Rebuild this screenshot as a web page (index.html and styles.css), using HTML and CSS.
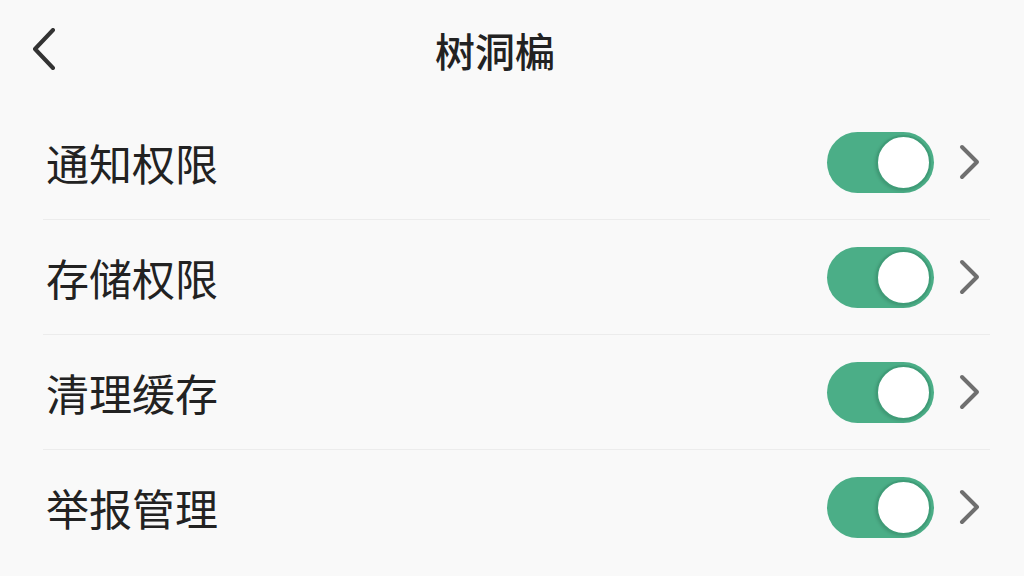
FILE: index.html
```html
<!DOCTYPE html>
<html lang="zh">
<head>
<meta charset="utf-8">
<title>树洞楄</title>
<link rel="stylesheet" href="styles.css">
</head>
<body>
<div class="page">
  <header class="header">
    <span class="back">
      <svg width="26" height="42" viewBox="0 0 26 42"><polyline points="22,2 4,21 22,40" fill="none" stroke="#333" stroke-width="4" stroke-linecap="round" stroke-linejoin="round"/></svg>
    </span>
    <h1 class="title">树洞楄</h1>
  </header>
  <ul class="list">
    <li class="row"><span class="label">通知权限</span><span class="toggle"><span class="knob"></span></span><span class="arrow"><svg width="22" height="36" viewBox="0 0 22 36"><polyline points="3,3 18,18 3,33" fill="none" stroke="#6f6f6f" stroke-width="4" stroke-linecap="round" stroke-linejoin="round"/></svg></span></li>
    <li class="row"><span class="label">存储权限</span><span class="toggle"><span class="knob"></span></span><span class="arrow"><svg width="22" height="36" viewBox="0 0 22 36"><polyline points="3,3 18,18 3,33" fill="none" stroke="#6f6f6f" stroke-width="4" stroke-linecap="round" stroke-linejoin="round"/></svg></span></li>
    <li class="row"><span class="label">清理缓存</span><span class="toggle"><span class="knob"></span></span><span class="arrow"><svg width="22" height="36" viewBox="0 0 22 36"><polyline points="3,3 18,18 3,33" fill="none" stroke="#6f6f6f" stroke-width="4" stroke-linecap="round" stroke-linejoin="round"/></svg></span></li>
    <li class="row last"><span class="label">举报管理</span><span class="toggle"><span class="knob"></span></span><span class="arrow"><svg width="22" height="36" viewBox="0 0 22 36"><polyline points="3,3 18,18 3,33" fill="none" stroke="#6f6f6f" stroke-width="4" stroke-linecap="round" stroke-linejoin="round"/></svg></span></li>
  </ul>
</div>
</body>
</html>
```
FILE: styles.css
```css
html, body {
  margin: 0;
  padding: 0;
  background: #f9f9f9;
}
body {
  font-family: "Noto Sans CJK SC", "Noto Sans", sans-serif;
  color: #222;
  width: 1024px;
  height: 576px;
  overflow: hidden;
}
.page {
  display: flex;
  flex-direction: column;
}
.header {
  height: 105px;
  display: flex;
  align-items: center;
  padding: 0 0 0 31px;
  box-sizing: border-box;
}
.back {
  display: flex;
  width: 26px;
  height: 42px;
  margin-top: -8px;
}
.title {
  margin: -6px 0 0 378px;
  font-size: 40px;
  font-weight: 500;
  line-height: 1;
  color: #222;
}
.list {
  list-style: none;
  margin: 0;
  padding: 0 34px 0 43px;
}
.row {
  height: 114px;
  display: flex;
  align-items: center;
  border-bottom: 1px solid #ececec;
  padding-left: 3px;
}
.row.last {
  border-bottom: none;
}
.label {
  font-size: 43px;
  line-height: 1;
  flex: 1;
  color: #222;
  margin-top: 0;
}
.toggle {
  width: 107px;
  height: 61px;
  border-radius: 31px;
  background: #4bae87;
  position: relative;
  margin-top: 0;
}
.knob {
  position: absolute;
  right: 3px;
  top: 3px;
  width: 51px;
  height: 51px;
  border-radius: 50%;
  background: #fff;
  border: 2px solid #3f9c77;
  box-shadow: -1px 1px 3px rgba(0,0,0,0.12);
}
.arrow {
  display: flex;
  width: 22px;
  height: 36px;
  margin-left: 25px;
  margin-right: 9px;
  margin-top: 0;
}
```
